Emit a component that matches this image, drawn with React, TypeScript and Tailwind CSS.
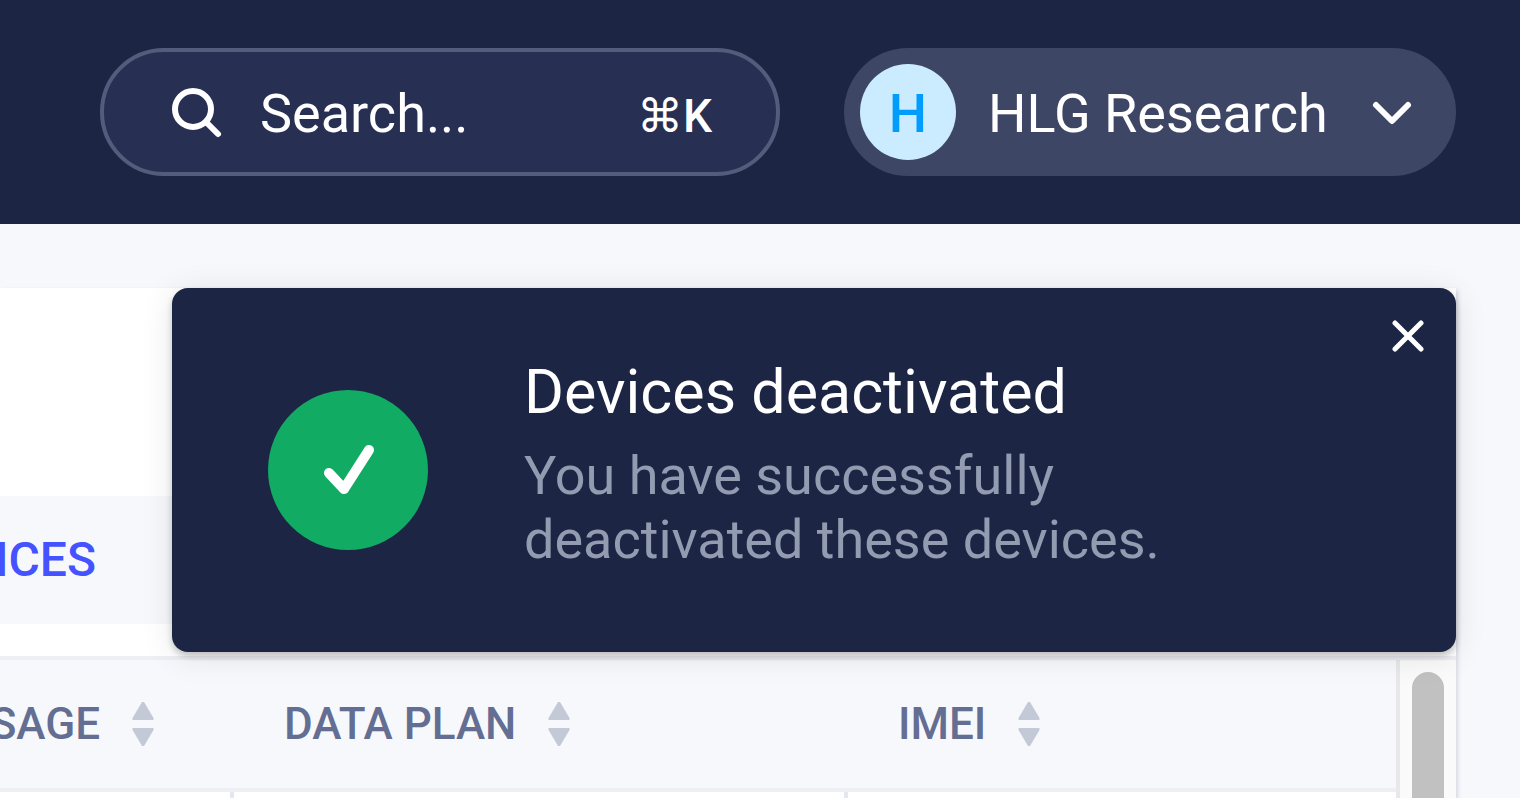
import React, { useState } from "react";

const columns = [
  { name: "USAGE", col: "w-[234px]", cell: "justify-end pr-20" },
  { name: "DATA PLAN", col: "w-[614px]", cell: "pl-[50px]" },
  { name: "IMEI", col: "", cell: "pl-[50px]" },
];

function SortIcon() {
  return (
    <svg
      className="shrink-0"
      width="22"
      height="44"
      viewBox="0 0 22 44"
      fill="#c3c9d6"
    >
      <path d="M10 0h2l9.500 16v2H.5v-2z" />
      <path d="M10 44h2l9.500-16v-2H.5v2z" />
    </svg>
  );
}

function Header() {
  return (
    <header className="flex gap-16 bg-[#1d2545] py-12 pl-[100px] pr-16">
      <label className="flex h-32 min-w-0 flex-1 items-center rounded-full border-4 border-[#535c7a] bg-[#272f53] pl-16 pr-16">
        <svg
          className="shrink-0"
          width="56"
          height="56"
          viewBox="0 0 56 56"
          fill="none"
          stroke="white"
          strokeWidth="6"
          strokeLinecap="round"
        >
          <circle cx="25" cy="25" r="18" />
          <path d="M38 38l12 12" />
        </svg>
        <input
          type="text"
          aria-label="Search"
          placeholder="Search..."
          className="ml-9 min-w-0 flex-1 bg-transparent pt-1 text-[54px] leading-[64px] text-white outline-none placeholder:text-white"
        />
        <kbd className="flex items-center pt-2 font-['Roboto','DejaVu_Sans',sans-serif] text-[46px] font-medium leading-[64px] text-white">
          <span className="font-normal">⌘</span>
          <span>K</span>
        </kbd>
      </label>
      <button className="flex h-32 w-[612px] shrink-0 items-center rounded-full bg-[#3d4665] pl-4 pr-10 text-[54px] leading-[64px] text-white">
        <span className="flex size-24 items-center justify-center rounded-full bg-[#cbebff] pt-1 font-medium text-[#009dff]">
          H
        </span>
        <span className="ml-8 flex-1 pt-1 text-left">HLG Research</span>
        <svg
          width="48"
          height="48"
          viewBox="0 0 48 48"
          fill="none"
          stroke="white"
          strokeWidth="6"
          strokeLinecap="round"
          strokeLinejoin="round"
        >
          <path d="M8 17l16 16 16-16" />
        </svg>
      </button>
    </header>
  );
}

function Toast({ onClose }: any) {
  return (
    <div
      role="status"
      className="absolute right-16 top-16 flex w-[1284px] items-center rounded-2xl bg-[#1d2545] px-24 py-16 shadow-[0_4px_6px_rgba(0,0,0,0.2),0_4px_32px_rgba(0,0,0,0.1)]"
    >
      <div className="flex size-40 shrink-0 items-center justify-center rounded-full bg-[#12ab63]">
        <svg
          width="64"
          height="64"
          viewBox="0 0 64 64"
          fill="none"
          stroke="white"
          strokeWidth="10"
          strokeLinecap="round"
          strokeLinejoin="round"
        >
          <path d="M13 35l15 16 25-39" />
        </svg>
      </div>
      <div className="ml-24 pb-4">
        <h2 className="text-[61px] leading-[80px] text-white">
          Devices deactivated
        </h2>
        <p className="mt-3 text-[54px] leading-[64px] text-[#929bb0]">
          You have successfully
          <br />
          deactivated these devices.
        </p>
      </div>
      <button
        aria-label="Close"
        className="absolute right-6 top-6 flex size-12 items-center justify-center"
        onClick={onClose}
      >
        <svg
          width="32"
          height="32"
          viewBox="0 0 32 32"
          fill="none"
          stroke="white"
          strokeWidth="5"
          strokeLinecap="round"
        >
          <path d="M3 3l26 26M29 3L3 29" />
        </svg>
      </button>
    </div>
  );
}

function DevicesTable() {
  return (
    <div className="flex border-t-4 border-[#eeeff4]">
      <div className="min-w-0 flex-1">
        <table className="w-full table-fixed border-separate border-spacing-0">
          <thead>
            <tr>
              {columns.map((column) => (
                <th
                  key={column.name}
                  scope="col"
                  className={`${column.col} h-[132px] overflow-hidden border-b-4 border-[#eeeff4] bg-[#f7f8fc] p-0`}
                >
                  <button
                    className={`${column.cell} flex w-full items-center gap-8 whitespace-nowrap text-[44px] font-medium leading-[64px] text-[#636e92]`}
                  >
                    {column.name}
                    <SortIcon />
                  </button>
                </th>
              ))}
            </tr>
          </thead>
          <tbody>
            <tr>
              {columns.map((column) => (
                <td
                  key={column.name}
                  className="h-32 border-r-4 border-[#e5e7f0] last:border-r-0"
                />
              ))}
            </tr>
          </tbody>
        </table>
      </div>
      <div className="w-[60px] border-l-4 border-[#e8e8e8] bg-[#fafafa] px-3 pt-3">
        <div className="h-full rounded-t-full bg-[#c1c1c1]" />
      </div>
    </div>
  );
}

export default function App() {
  const [showToast, setShowToast] = useState(true);

  return (
    <div className="flex h-screen flex-col overflow-hidden bg-[#f7f8fc] font-['Roboto',sans-serif]">
      <Header />
      <main className="relative flex-1 pr-16 pt-16">
        <section className="bg-white pt-52 shadow-[2px_2px_4px_rgba(29,37,69,0.14)]">
          <nav className="flex h-32 items-center bg-[#f7f8fc]">
            <div className="flex w-24 justify-end">
              <a
                href="#devices"
                className="text-5xl font-medium text-[#4552ff]"
              >
                DEVICES
              </a>
            </div>
          </nav>
          <div className="pt-8">
            <DevicesTable />
          </div>
        </section>
        {showToast && <Toast onClose={() => setShowToast(false)} />}
      </main>
    </div>
  );
}
